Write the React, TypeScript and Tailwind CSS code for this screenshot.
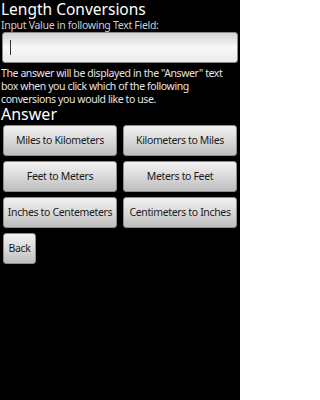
const conversions = [
  'Miles to Kilometers',
  'Kilometers to Miles',
  'Feet to Meters',
  'Meters to Feet',
  'Inches to Centemeters',
  'Centimeters to Inches',
];

function AndroidButton({ label, className = '' }: { label: string; className?: string }) {
  return (
    <button
      className={`flex h-[31px] items-center justify-center rounded-[3px] border border-[#8e8e8e] bg-gradient-to-b from-[#f2f2f2] via-[#dadada] to-[#bdbdbd] text-[10.5px] tracking-[-0.35px] text-[#1a1a1a] whitespace-nowrap ${className}`}
    >
      {label}
    </button>
  );
}

export default function App() {
  return (
    <div className="h-[400px] w-[240px] overflow-hidden bg-black font-['Noto_Sans','Open_Sans',sans-serif] text-white">
      <h1 className="pl-[1px] text-[15.5px] leading-[19px]">Length Conversions</h1>
      <p className="pl-[1px] text-[10.5px] leading-[12px] tracking-[-0.3px] text-[#cfcfcf]">
        Input Value in following Text Field:
      </p>
      <div className="mx-[2px] mt-[1px] flex h-[31px] items-center rounded-[3px] border border-[#8a8a8a] bg-gradient-to-b from-[#d4d4d4] via-[#f8f8f8] to-[#ececec] pl-[7px]">
        <div className="h-[15px] w-[1px] bg-[#333]" />
      </div>
      <p className="mt-[4px] pl-[1px] text-[10.5px] leading-[13px] tracking-[-0.4px] text-[#e4e4e4]">
        The answer will be displayed in the "Answer" text box when you click which of the
        following conversions you would like to use.
      </p>
      <h2 className="pl-[1px] text-[16px] leading-[17px]">Answer</h2>
      <div className="mt-[2px] grid grid-cols-2 gap-x-[6px] gap-y-[5px] px-[3px]">
        {conversions.map((c) => (
          <AndroidButton key={c} label={c} />
        ))}
      </div>
      <div className="mt-[5px] px-[3px]">
        <AndroidButton label="Back" className="w-[33px]" />
      </div>
    </div>
  );
}
